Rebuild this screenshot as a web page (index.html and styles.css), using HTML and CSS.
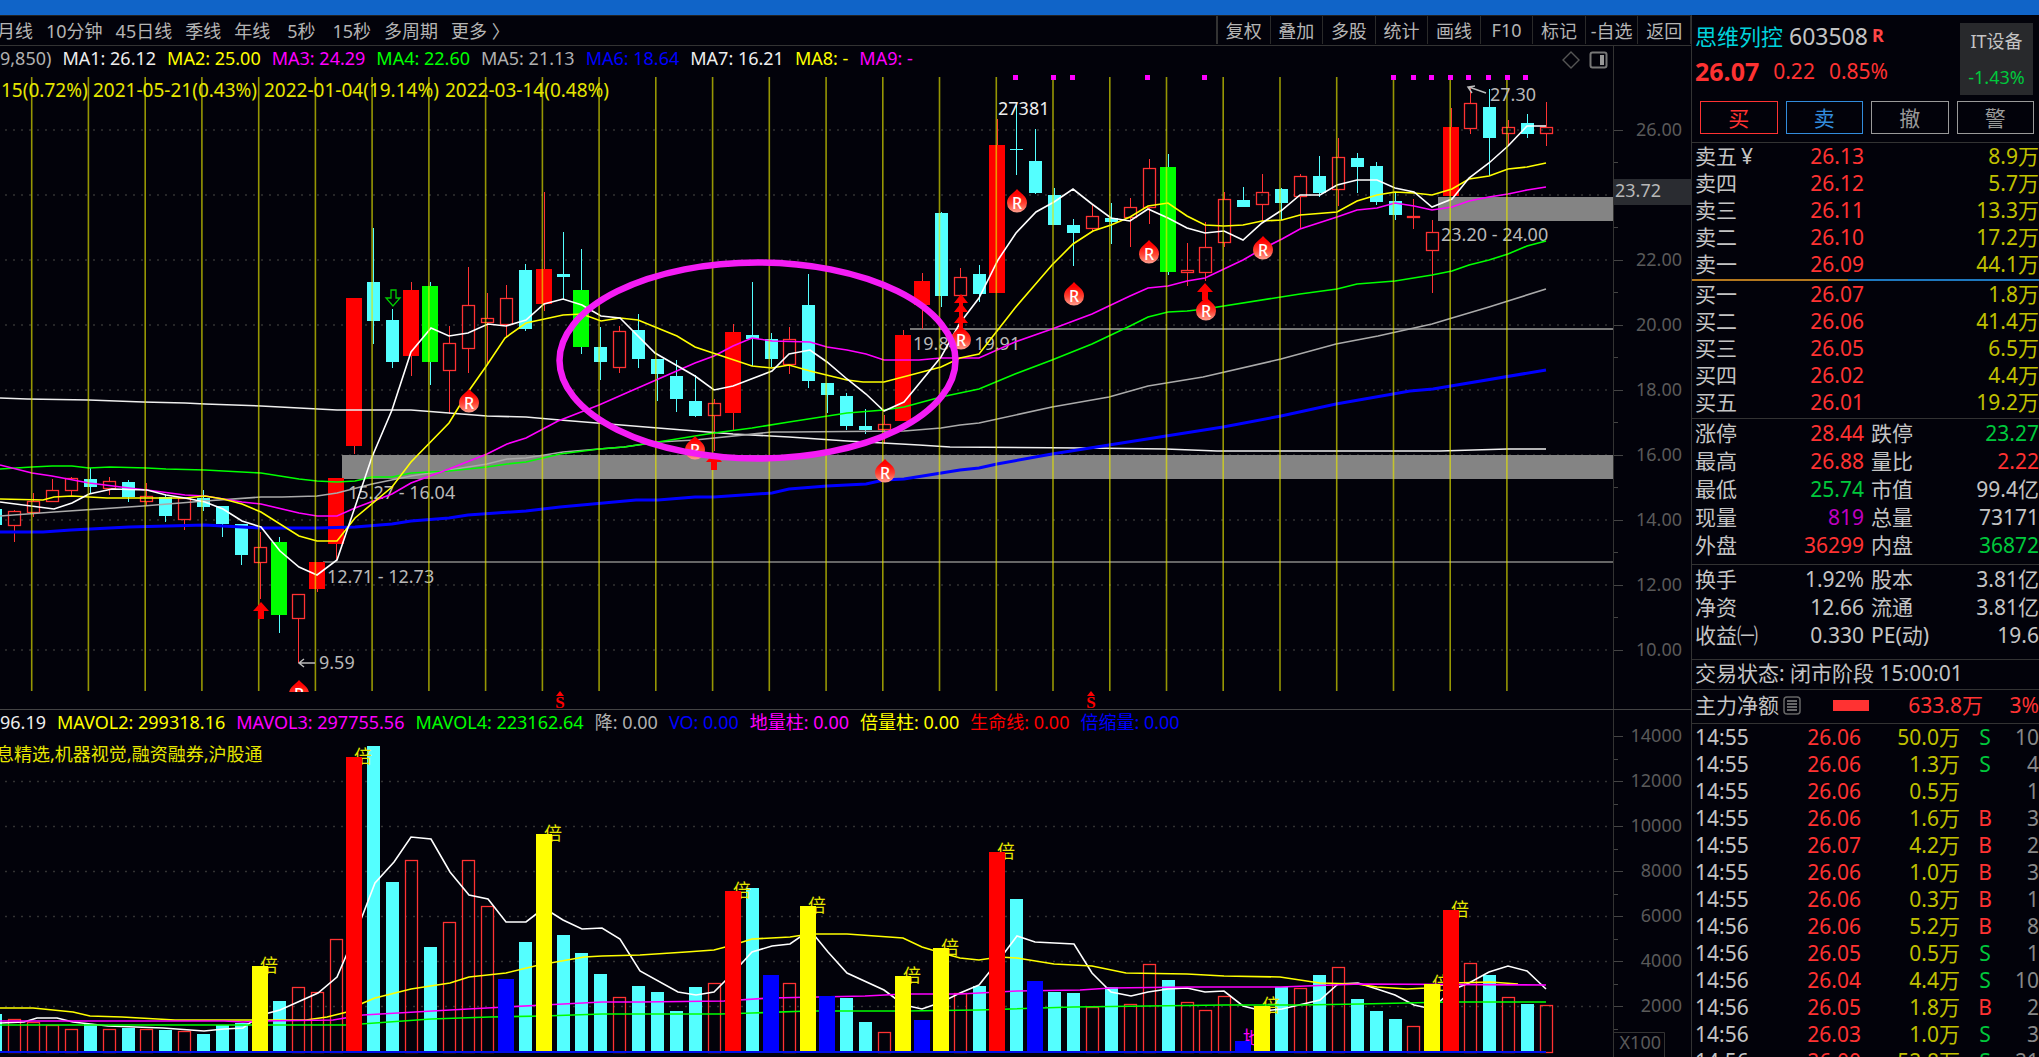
FILE: index.html
```html
<!DOCTYPE html>
<html lang="zh-CN">
  <head>
    <meta charset="UTF-8" />
    <meta name="viewport" content="width=device-width, initial-scale=1.0" />
    <title>思维列控 603508</title>
    <link rel="stylesheet" href="styles.css">
  </head>
  <body>
    <div class="titlebar"></div>
    <div class="app">
      <main class="main">
        <nav class="toolbar">
          <div class="periods">
            <button>月线</button>
            <button>10分钟</button>
            <button>45日线</button>
            <button>季线</button>
            <button>年线</button>
            <button class="sec">5秒</button>
            <button class="sec">15秒</button>
            <button>多周期</button>
            <button>更多 〉</button>
          </div>
          <div class="tools">
            <button>复权</button>
            <button>叠加</button>
            <button>多股</button>
            <button>统计</button>
            <button>画线</button>
            <button>F10</button>
            <button>标记</button>
            <button>-自选</button>
            <button>返回</button>
          </div>
        </nav>

        <div class="legend-row">
          <div class="legend">
            <span class="gray">9,850)</span>
            <span class="white">MA1: 26.12</span>
            <span class="yellow">MA2: 25.00</span>
            <span class="magenta">MA3: 24.29</span>
            <span class="green">MA4: 22.60</span>
            <span class="gray">MA5: 21.13</span>
            <span class="blue">MA6: 18.64</span>
            <span class="white">MA7: 16.21</span>
            <span class="yellow">MA8: -</span>
            <span class="magenta">MA9: -</span>
          </div>
          <div class="legend-icons">
            <svg width="18" height="18" viewBox="0 0 18 18">
              <path d="M9 1L17 9L9 17L1 9Z" fill="none" stroke="#555" stroke-width="1.4" />
            </svg>
            <svg width="20" height="18" viewBox="0 0 20 18">
              <rect x="1.5" y="1.5" width="16" height="15" rx="2" fill="none" stroke="#777" stroke-width="2" />
              <rect x="11" y="4" width="4" height="10" fill="#999" />
            </svg>
          </div>
          <div class="axis-head"></div>
        </div>
        <svg id="kline" class="chart" viewBox="0 70 1691 640"></svg>

        <div class="legend-row volume-row">
          <div class="legend">
            <span class="white">96.19</span>
            <span class="yellow">MAVOL2: 299318.16</span>
            <span class="magenta">MAVOL3: 297755.56</span>
            <span class="green">MAVOL4: 223162.64</span>
            <span class="gray">降: 0.00</span>
            <span class="blue">VO: 0.00</span>
            <span class="magenta">地量柱: 0.00</span>
            <span class="yellow">倍量柱: 0.00</span>
            <span class="red">生命线: 0.00</span>
            <span class="blue">倍缩量: 0.00</span>
          </div>
          <div class="axis-head"></div>
        </div>
        <svg id="volume" class="chart" viewBox="0 735 1691 322"></svg>
      </main>

      <aside class="side">
        <header class="quote">
          <div class="quote-main">
            <div class="name"><span class="cyan">思维列控</span> 603508<sup>R</sup></div>
            <div class="price"><b>26.07</b><span>0.22</span><span>0.85%</span></div>
          </div>
          <div class="sector"><span>IT设备</span><span class="down">-1.43%</span></div>
        </header>
        <div class="actions">
          <button class="buy">买</button>
          <button class="sell">卖</button>
          <button>撤</button>
          <button>警</button>
        </div>

        <table class="book asks">
          <tr><th>卖五<small>¥</small></th><td class="up">26.13</td><td class="amt">8.9万</td></tr>
          <tr><th>卖四</th><td class="up">26.12</td><td class="amt">5.7万</td></tr>
          <tr><th>卖三</th><td class="up">26.11</td><td class="amt">13.3万</td></tr>
          <tr><th>卖二</th><td class="up">26.10</td><td class="amt">17.2万</td></tr>
          <tr><th>卖一</th><td class="up">26.09</td><td class="amt">44.1万</td></tr>
        </table>
        <div class="ratio"></div>
        <table class="book">
          <tr><th>买一</th><td class="up">26.07</td><td class="amt">1.8万</td></tr>
          <tr><th>买二</th><td class="up">26.06</td><td class="amt">41.4万</td></tr>
          <tr><th>买三</th><td class="up">26.05</td><td class="amt">6.5万</td></tr>
          <tr><th>买四</th><td class="up">26.02</td><td class="amt">4.4万</td></tr>
          <tr><th>买五</th><td class="up">26.01</td><td class="amt">19.2万</td></tr>
        </table>

        <div class="block">
          <table class="stats">
            <tr><th>涨停</th><td class="up">28.44</td><th>跌停</th><td class="down">23.27</td></tr>
            <tr><th>最高</th><td class="up">26.88</td><th>量比</th><td class="up">2.22</td></tr>
            <tr><th>最低</th><td class="down">25.74</td><th>市值</th><td>99.4亿</td></tr>
            <tr><th>现量</th><td class="purple">819</td><th>总量</th><td>73171</td></tr>
            <tr><th>外盘</th><td class="up">36299</td><th>内盘</th><td class="down">36872</td></tr>
          </table>
        </div>
        <div class="block last">
          <table class="stats">
            <tr><th>换手</th><td>1.92%</td><th>股本</th><td>3.81亿</td></tr>
            <tr><th>净资</th><td>12.66</td><th>流通</th><td>3.81亿</td></tr>
            <tr><th>收益㈠</th><td>0.330</td><th>PE(动)</th><td>19.6</td></tr>
          </table>
        </div>
        <div class="status">交易状态: 闭市阶段 15:00:01</div>
        <div class="flow">
          <span>主力净额</span>
          <svg width="18" height="19" viewBox="0 0 18 19">
            <rect x="1" y="1" width="16" height="17" rx="3" fill="none" stroke="#666" stroke-width="1.5" />
            <path d="M4 5H14M4 8H14M4 11H14M4 14H14" stroke="#888" stroke-width="1.5" />
          </svg>
          <i></i>
          <span class="flow-amt up">633.8万</span>
          <span class="flow-pct up">3%</span>
        </div>

        <table class="ticks">
          <tr><td>14:55</td><td>26.06</td><td>50.0万</td><td class="down">S</td><td>10</td></tr>
          <tr><td>14:55</td><td>26.06</td><td>1.3万</td><td class="down">S</td><td>4</td></tr>
          <tr><td>14:55</td><td>26.06</td><td>0.5万</td><td></td><td>1</td></tr>
          <tr><td>14:55</td><td>26.06</td><td>1.6万</td><td class="up">B</td><td>3</td></tr>
          <tr><td>14:55</td><td>26.07</td><td>4.2万</td><td class="up">B</td><td>2</td></tr>
          <tr><td>14:55</td><td>26.06</td><td>1.0万</td><td class="up">B</td><td>3</td></tr>
          <tr><td>14:55</td><td>26.06</td><td>0.3万</td><td class="up">B</td><td>1</td></tr>
          <tr><td>14:56</td><td>26.06</td><td>5.2万</td><td class="up">B</td><td>8</td></tr>
          <tr><td>14:56</td><td>26.05</td><td>0.5万</td><td class="down">S</td><td>1</td></tr>
          <tr><td>14:56</td><td>26.04</td><td>4.4万</td><td class="down">S</td><td>10</td></tr>
          <tr><td>14:56</td><td>26.05</td><td>1.8万</td><td class="up">B</td><td>2</td></tr>
          <tr><td>14:56</td><td>26.03</td><td>1.0万</td><td class="down">S</td><td>3</td></tr>
          <tr><td>14:56</td><td>26.00</td><td>52.8万</td><td class="down">S</td><td>21</td></tr>
        </table>
      </aside>
    </div>

    <script src="chart.js"></script>
  </body>
</html>
```
FILE: styles.css
```css
* {
  box-sizing: border-box;
}

body {
  margin: 0;
  height: 100vh;
  display: flex;
  flex-direction: column;
  overflow: hidden;
  background-color: #02020a;
  color: #c4c4c4;
  font-family: "Noto Sans", "Noto Sans CJK SC", sans-serif;
  font-size: 18px;
}

button {
  background: none;
  border: 0;
  padding: 0;
  color: inherit;
  font: inherit;
  white-space: nowrap;
  cursor: pointer;
}

.titlebar {
  height: 15px;
  flex-shrink: 0;
  background-color: #1064c8;
}

.app {
  flex: 1;
  display: flex;
  min-height: 0;
}

.main {
  flex: 1;
  min-width: 0;
  overflow: hidden;
}

/* toolbar */
.toolbar {
  display: flex;
  justify-content: space-between;
  height: 31px;
  padding-bottom: 1px;
  border-top: 1px solid #222;
  border-bottom: 1px solid #333;
  color: #b4b4b4;
  overflow: hidden;
}

.periods {
  display: flex;
  align-items: center;
  gap: 13px;
  margin-left: -3px;
}

.periods .sec {
  padding-left: 4px;
}

.tools {
  display: grid;
  grid-template-columns: repeat(9, 1fr);
  width: 475px;
  border-left: 2px solid #333;
}

.tools button {
  border-right: 1px solid #2a2a2a;
}

.tools button:hover,
.periods button:hover {
  color: #fff;
}

/* indicator legends */
.legend-row {
  display: flex;
  height: 24px;
  line-height: 24px;
  white-space: nowrap;
}

.volume-row {
  height: 25px;
}

.legend {
  flex: 1;
  display: flex;
  gap: 11px;
  overflow: hidden;
}

.legend-icons {
  display: flex;
  align-items: center;
  gap: 9px;
  padding: 4px 4px 0 0;
}

.axis-head {
  width: 78px;
  border-left: 1px solid #333;
}

.chart {
  display: block;
  width: 100%;
  height: auto;
  overflow: visible;
}

.white { color: #eee; }
.gray { color: #b0b0b0; }
.yellow { color: #ff0; }
.magenta { color: #f0f; }
.green { color: #0f0; }
.blue { color: #00f; }
.red { color: #f00; }
.cyan { color: #00d2dc; }
.up { color: #ff3232; }
.down { color: #00c83c; }
.purple { color: #c000c0; }
.amt { color: #c0c000; }

.chart text {
  font-size: 18px;
}

.chart .dates {
  font-size: 19px;
  fill: #e6e600;
}

.chart .axis {
  fill: #5a5a5a;
  text-anchor: end;
}

.chart .note {
  fill: #b8b8b8;
}

.chart .r-text {
  font-size: 16px;
  font-weight: 500;
  fill: #fff;
  text-anchor: middle;
}

.chart .s-text {
  font-family: "Liberation Serif", serif;
  font-size: 17px;
  font-weight: bold;
  fill: #f00;
  text-anchor: middle;
}

/* right panel */
.side {
  width: 348px;
  flex-shrink: 0;
  border-left: 1px solid #333;
  font-size: 21px;
  line-height: 27px;
  overflow: hidden;
}

.quote {
  display: flex;
  justify-content: space-between;
  height: 80px;
  padding: 8px 6px 0 3px;
}

.quote-main {
  white-space: nowrap;
}

.name {
  font-size: 23px;
  line-height: 26px;
}

.name .cyan {
  font-size: 22px;
}

.name sup {
  margin-left: 4px;
  font-size: 18px;
  font-weight: bold;
  line-height: 1;
  vertical-align: 3px;
  color: #ff4646;
}

.price {
  display: flex;
  align-items: center;
  gap: 14px;
  height: 44px;
  color: #ff3232;
}

.price b {
  font-size: 25px;
}

.sector {
  display: flex;
  flex-direction: column;
  justify-content: space-around;
  width: 73px;
  height: 72px;
  background-color: #28292c;
  font-size: 18px;
  text-align: center;
}

.actions {
  display: grid;
  grid-template-columns: repeat(4, 1fr);
  gap: 8px;
  padding: 6px 5px 8px 8px;
  border-bottom: 1px solid #333;
}

.actions button {
  height: 33px;
  line-height: 30px;
  border: 1px solid #999;
  color: #999;
}

.actions .buy {
  border-color: #ff3232;
  color: #ff3232;
}

.actions .sell {
  border-color: #328cdc;
  color: #328cdc;
}

table {
  width: 100%;
  border-collapse: collapse;
  table-layout: fixed;
}

th,
td {
  padding: 0;
  font-weight: normal;
  text-align: right;
  white-space: nowrap;
}

th {
  text-align: left;
}

tr {
  height: 27px;
}

.book th {
  width: 92px;
  padding-left: 3px;
}

.book th small {
  margin-left: 4px;
  font-size: 21px;
}

.book .up {
  width: 80px;
}

.asks {
  margin-bottom: 1px;
}

.ratio {
  height: 2px;
  background: linear-gradient(90deg, #b4781e 45%, #1e78be 45%);
}

.block {
  margin-top: 2px;
  padding: 0 0 5px;
  border-top: 1px solid #333;
}

.block.last {
  margin-top: 0;
  padding-bottom: 10px;
}

.stats {
  line-height: 28px;
}

.stats tr {
  height: 28px;
}

.stats th {
  width: 85px;
  padding-left: 3px;
}

.stats td:nth-child(2) {
  width: 87px;
}

.stats td + th {
  padding-left: 7px;
}

.status {
  height: 30px;
  padding-left: 3px;
  border-top: 1px solid #333;
}

.flow {
  display: flex;
  align-items: center;
  height: 35px;
  padding: 0 0 3px 3px;
  border-top: 1px solid #333;
  border-bottom: 1px solid #333;
  white-space: nowrap;
}

.flow svg {
  margin-left: 4px;
}

.flow i {
  width: 36px;
  height: 11px;
  margin-left: 32px;
  background-color: #ff3232;
}

.flow-amt {
  width: 114px;
  text-align: right;
}

.flow-pct {
  flex: 1;
  text-align: right;
}

.ticks td:nth-child(1) {
  width: 79px;
  padding-left: 3px;
  text-align: left;
}

.ticks td:nth-child(2) {
  width: 90px;
  color: #ff3232;
}

.ticks td:nth-child(3) {
  width: 99px;
  color: #c0c000;
}

.ticks td:nth-child(4) {
  width: 50px;
  text-align: center;
}

.ticks td:nth-child(5) {
  color: #888;
}
```
FILE: chart.js
```js
const CYAN = "#54ffff";
const RED = "#ff3232";

// type, high, body top, body bottom, low, volume top
// c = falling, r = rising (hollow), R = limit up, G = limit down
// volume colour follows the type unless a letter is given at the end
const candles = [
  ["c", 509, 509, 525, 525, 1014],
  ["r", 510, 511, 526, 542, 1019],
  ["r", 493, 501, 513, 517, 1022],
  ["r", 479, 490, 502, 502, 1025],
  ["r", 477, 478, 491, 497, 1029],
  ["c", 468, 479, 487, 493, 1024],
  ["r", 477, 481, 489, 495, 1029],
  ["c", 480, 482, 497, 502, 1028],
  ["r", 483, 496, 502, 506, 1029],
  ["c", 495, 497, 516, 522, 1030],
  ["r", 498, 498, 520, 530, 1031],
  ["c", 490, 498, 507, 511, 1034],
  ["c", 506, 506, 524, 537, 1025],
  ["c", 524, 524, 555, 565, 1023],
  ["r", 532, 547, 563, 599, 966, "Y"],
  ["G", 537, 542, 615, 633, 1001, "c"],
  ["r", 594, 594, 619, 663, 987],
  ["R", 562, 562, 589, 592, 992, "r"],
  ["R", 478, 478, 544, 560, 939, "r"],
  ["R", 298, 298, 446, 454, 757],
  ["c", 228, 282, 321, 344, 746],
  ["c", 309, 320, 362, 368, 882],
  ["R", 282, 290, 356, 376, 860, "r"],
  ["G", 282, 286, 362, 385, 947, "c"],
  ["r", 326, 343, 371, 414, 922],
  ["r", 267, 305, 349, 373, 860],
  ["r", 293, 318, 323, 365, 906],
  ["r", 285, 298, 325, 337, 979, "B"],
  ["c", 264, 270, 329, 331, 942],
  ["R", 192, 269, 304, 311, 834, "Y"],
  ["c", 232, 274, 277, 299, 935],
  ["G", 249, 290, 347, 354, 953, "c"],
  ["c", 327, 347, 362, 380, 974],
  ["r", 326, 331, 368, 373, 997],
  ["c", 314, 330, 359, 368, 986],
  ["c", 359, 359, 374, 401, 992],
  ["c", 360, 376, 399, 412, 1011],
  ["c", 375, 401, 416, 417, 987],
  ["r", 399, 403, 416, 451, 983],
  ["R", 324, 332, 413, 430, 891],
  ["c", 282, 335, 339, 366, 888],
  ["c", 333, 339, 359, 367, 975, "B"],
  ["r", 327, 339, 365, 374, 983],
  ["c", 274, 305, 381, 388, 906, "Y"],
  ["c", 383, 383, 395, 413, 996, "B"],
  ["c", 393, 396, 426, 430, 998],
  ["c", 409, 426, 430, 434, 1022],
  ["r", 415, 424, 430, 444, 1032],
  ["R", 330, 335, 421, 421, 976, "Y"],
  ["R", 273, 281, 305, 329, 1020, "B"],
  ["c", 212, 213, 296, 307, 948, "Y"],
  ["r", 268, 277, 296, 296, 993],
  ["c", 265, 274, 294, 302, 986],
  ["R", 119, 145, 293, 293, 852],
  ["c", 105, 149, 150, 175, 899],
  ["c", 129, 161, 193, 194, 981, "B"],
  ["c", 188, 195, 225, 225, 992],
  ["c", 219, 225, 233, 266, 993],
  ["r", 205, 216, 229, 232, 1007],
  ["c", 203, 218, 222, 244, 987],
  ["r", 198, 207, 218, 247, 1004],
  ["r", 159, 168, 208, 224, 964],
  ["G", 154, 167, 272, 275, 980, "c"],
  ["r", 243, 270, 273, 286, 1002],
  ["r", 222, 247, 273, 281, 1010],
  ["r", 192, 199, 243, 247, 996],
  ["c", 187, 200, 207, 207, 1041, "B"],
  ["r", 174, 192, 205, 221, 1006, "Y"],
  ["c", 188, 189, 203, 220, 987],
  ["r", 174, 176, 197, 228, 988],
  ["c", 156, 176, 193, 197, 975],
  ["r", 138, 157, 190, 206, 967],
  ["c", 153, 158, 167, 193, 999],
  ["c", 162, 166, 202, 205, 1011],
  ["c", 192, 201, 215, 220, 1019],
  ["r", 199, 216, 218, 229, 1026],
  ["r", 220, 232, 251, 293, 984, "Y"],
  ["R", 108, 127, 196, 196, 910],
  ["r", 88, 103, 129, 134, 963],
  ["c", 89, 107, 138, 175, 975],
  ["r", 120, 127, 134, 146, 997],
  ["c", 114, 123, 134, 138, 1004],
  ["r", 102, 127, 134, 146, 1005],
];

const cx = (i) => Math.round(-4.8 + 18.91 * i);

const rect = (x, y, w, h, fill) =>
  `<rect x="${x}" y="${y}" width="${w}" height="${h}" fill="${fill}" shape-rendering="crispEdges"/>`;
const hollow = (x, y, w, h) =>
  `<rect x="${x + 0.5}" y="${y + 0.5}" width="${w - 1}" height="${Math.max(h - 1, 1)}" fill="none" stroke="${RED}" stroke-width="1.3"/>`;
const line = (points, color, width = 1.6) =>
  `<polyline points="${points}" fill="none" stroke="${color}" stroke-width="${width}"/>`;
const text = (x, y, cls, value, fill) =>
  `<text x="${x}" y="${y}" class="${cls}"${fill ? ` fill="${fill}"` : ""}>${value}</text>`;
const dots = (y) =>
  `<path d="M5 ${y}H1612" stroke="#333" stroke-width="1.5" stroke-dasharray="2 6"/>`;

function drawKline() {
  let s = `<defs><linearGradient id="drop" x1="0" y1="0" x2="0" y2="1">
    <stop offset="0.2" stop-color="#f00"/><stop offset="0.6" stop-color="#ff4030"/><stop offset="1" stop-color="#ffa090"/>
  </linearGradient></defs>`;

  // grid and price axis
  for (let p = 26, k = 0; p >= 10; p -= 2, k++) {
    const y = 130 + k * 65;
    s += dots(y) + rect(1614, y, 9, 1, "#444");
    if (k < 8) s += rect(1614, y + 32, 4, 1, "#444");
    if (p !== 24) s += text(1682, y + 6, "axis", p.toFixed(2));
  }
  s += rect(1613, 70, 1, 640, "#333") + rect(0, 709, 1691, 1, "#444");
  s += rect(1614, 179, 77, 26, "#2a2c31") + text(1615, 197, "note", "23.72");

  // gaps
  s += rect(342, 455, 1271, 24, "#848484") + rect(1438, 197, 175, 24, "#848484");
  s += rect(323, 561, 1290, 2, "#666") + rect(910, 328, 703, 2, "#777");
  s += text(348, 499, "note", "15.27 - 16.04") + text(327, 583, "note", "12.71 - 12.73");
  s += text(913, 350, "note", "19.84 - 19.91") + text(1441, 241, "note", "23.20 - 24.00");

  candles.forEach(([type, high, top, bottom, low], i) => {
    const x = cx(i);
    const h = Math.max(bottom - top, 1);
    const wick = type === "c" || type === "G" ? CYAN : RED;
    s += rect(x, high, 1, top - high, wick) + rect(x, bottom, 1, low - bottom, wick);
    if (type === "c") s += rect(x - 6, top, 13, h, CYAN);
    if (type === "r") s += hollow(x - 6, top, 13, h);
    if (type === "R") s += rect(x - 8, top, 16, h, "#f00");
    if (type === "G") s += rect(x - 8, top, 16, h, "#0f0");
  });

  // moving averages
  s += line("0,398 27,399 89,400 143,402 185,403 205,404 261,406 299,408 337,410 411,410 449,413 487,416 526,417 560,420 658,428 733,434 789,437 847,441 919,445 950,447 1084,448 1166,449 1217,451 1440,451 1507,449 1546,449", "#eee");
  s += line("0,532 43,532 71,530 129,527 205,525 223,526 261,528 317,528 355,527 392,524 411,521 449,518 468,515 526,511 560,507 636,500 658,500 695,497 714,497 772,493 789,489 827,486 866,484 884,480 904,479 960,470 979,468 997,464 1052,454 1109,445 1166,436 1223,427 1281,416 1336,404 1410,391 1433,389 1546,370", "#00f", 3);
  s += line("0,516 54,512 143,506 205,501 261,497 282,497 317,496 337,493 372,484 411,476 449,470 487,464 507,459 526,458 563,452 599,449 624,447 658,442 695,440 772,432 789,432 904,431 941,428 960,425 979,423 1052,407 1109,397 1148,386 1203,377 1281,359 1336,344 1378,336 1432,324 1452,318 1489,307 1508,301 1546,289", "#aaa");
  s += line("0,469 32,467 52,466 72,466 89,468 110,467 147,468 166,469 205,470 261,473 299,479 317,481 337,482 355,481 372,477 392,477 411,473 449,471 487,467 507,464 526,462 560,454 599,449 624,447 658,442 695,436 714,433 752,428 789,422 847,413 884,410 904,407 941,397 960,393 979,389 1015,374 1052,360 1092,344 1130,326 1148,317 1168,312 1187,311 1205,309 1300,294 1337,289 1357,284 1395,281 1432,275 1452,271 1469,265 1489,260 1508,254 1527,246 1546,241", "#0f0");
  s += line("0,465 32,473 52,476 89,483 129,488 147,490 185,495 205,496 242,502 261,504 299,513 317,516 337,516 355,508 392,494 411,483 449,469 487,454 507,444 526,438 558,421 599,405 624,394 695,363 714,356 733,346 752,338 772,341 810,342 827,347 847,350 866,354 884,360 919,360 941,358 979,358 1015,342 1052,329 1092,314 1130,296 1148,288 1168,286 1187,281 1205,278 1243,260 1262,249 1282,239 1300,229 1337,217 1357,210 1377,208 1395,203 1414,206 1432,210 1452,207 1469,201 1489,197 1508,194 1527,190 1546,187", "#f0f");
  s += line("0,499 43,500 54,497 72,496 107,498 185,498 205,496 223,499 242,504 261,512 299,536 317,541 337,541 355,518 392,487 411,462 449,423 468,392 487,365 505,338 526,323 563,315 582,314 601,321 620,318 638,320 677,336 695,347 752,366 772,368 789,365 810,371 847,380 863,382 884,382 941,367 960,358 979,354 1015,308 1052,265 1073,244 1093,231 1111,225 1130,217 1148,206 1168,203 1187,216 1205,225 1224,226 1243,225 1262,221 1282,220 1300,215 1337,212 1357,201 1377,195 1395,192 1414,193 1432,195 1452,189 1469,179 1489,176 1508,169 1527,167 1546,163", "#ff0");
  s += line("0,502 54,509 72,503 89,494 112,489 147,490 166,495 185,498 205,502 223,509 242,521 261,527 280,551 299,567 317,575 337,560 355,507 372,457 392,410 411,352 431,328 449,336 468,333 488,324 506,326 526,320 544,304 563,299 582,305 601,316 620,318 655,353 695,376 714,390 733,386 772,371 789,354 810,350 827,362 847,379 866,394 884,411 904,402 941,357 960,323 979,298 998,260 1016,233 1036,212 1054,202 1073,189 1092,204 1111,218 1130,221 1148,209 1168,218 1187,228 1205,233 1224,231 1243,240 1262,223 1282,210 1300,195 1320,195 1337,185 1357,180 1377,180 1395,188 1414,192 1432,207 1452,199 1469,178 1489,163 1508,146 1527,126 1546,126", "#fff");

  // every third bar gets a divider
  for (let k = 0; k < 27; k++) {
    s += `<path d="M${(31.7 + k * 56.74).toFixed(1)} 77V691" stroke="#e6e600" stroke-opacity="0.65" stroke-width="1.6"/>`;
  }

  const dates = [[1, "15(0.72%)"], [93, "2021-05-21(0.43%)"], [264, "2022-01-04(19.14%)"], [445, "2022-03-14(0.48%)"]];
  dates.forEach(([x, t]) => (s += text(x, 97, "dates", t)));

  [1015, 1053, 1072, 1147, 1204, 1393, 1413, 1431, 1450, 1468, 1488, 1507, 1525].forEach(
    (x) => (s += rect(x - 2, 75, 5, 5, "#f0f"))
  );

  // high and low callouts
  s += text(998, 115, "", "27381", "#eee") + text(1490, 101, "note", "27.30") + text(319, 669, "note", "9.59");
  s += '<path d="M1486 93L1469 87M1475 86L1468 87L1472 93M315 663H299M304 659L299 663L304 667" fill="none" stroke="#bbb" stroke-width="1.5"/>';

  // arrows
  [[261, 602], [714, 453], [1205, 283]].forEach(
    ([x, y]) => (s += `<path d="M${x} ${y}l8 9h-5v8h-6v-8h-5z" fill="#f00"/>`)
  );
  [294, 303, 314].forEach((y) => (s += `<path d="M961 ${y}l7 9h-5v6h-4v-6h-5z" fill="#f00"/>`));
  s += '<path d="M391 290h5v8h4l-7 8l-7 -8h5z" fill="none" stroke="#0c0" stroke-width="1.3"/>';

  [[469, 389], [299, 680], [695, 436], [885, 459], [1017, 189], [1074, 282], [1149, 240], [1206, 297], [1263, 236], [961, 326]].forEach(([x, y]) => {
    s += `<path d="M${x} ${y}C${x + 4} ${y + 5} ${x + 10} ${y + 7} ${x + 10} ${y + 14}a10 9.5 0 0 1 -20 0C${x - 10} ${y + 7} ${x - 4} ${y + 5} ${x} ${y}Z" fill="url(#drop)"/>`;
    s += text(x, y + 20, "r-text", "R");
  });
  s += rect(285, 692, 30, 14, "#02020a");

  [560, 1091].forEach((x) => {
    s += `<path d="M${x} 691l4 5h-8z" fill="#f00"/>` + text(x, 708, "s-text", "S");
  });

  s += '<ellipse cx="757.5" cy="360.5" rx="198" ry="98" fill="none" stroke="#f41cf4" stroke-width="6.5"/>';
  document.getElementById("kline").innerHTML = s;
}

function drawVolume() {
  const solid = { Y: "#ff0", R: "#f00", B: "#00f" };
  let s = "";

  for (let v = 14000, k = 0; v >= 2000; v -= 2000, k++) {
    const y = 736 + k * 45;
    if (k > 0) s += dots(y + 0.5);
    s += rect(1614, y, 9, 1, "#444") + rect(1614, y + 23, 4, 1, "#444");
    s += text(1682, y + 6, "axis", v);
  }
  s += rect(1613, 735, 1, 322, "#333");
  s += '<path d="M1614 1032.5H1664.5V1057" fill="none" stroke="#333"/>' + text(1661, 1049, "axis", "X100");
  s += text(-4, 761, "", "息精选,机器视觉,融资融券,沪股通", "#e6e600");

  const kind = (c) => c[6] || c[0];
  candles.forEach((c, i) => {
    if (kind(c) === "c") s += rect(cx(i) - 6, c[5], 13, 1053 - c[5], CYAN);
    if (kind(c) === "r") s += hollow(cx(i) - 6, c[5], 13, 1053 - c[5]);
  });

  candles.forEach((c, i) => {
    if ("YR".includes(kind(c))) s += text(cx(i), c[5] + 6, "", "倍", "#e6e600");
  });
  s += text(1243, 1044, "", "地", "#f0f");

  // volume averages
  s += line("0,1023 24,1022 37,1018 57,1018 73,1022 108,1026 163,1028 204,1031 224,1029 243,1028 261,1015 280,1010 318,993 337,977 355,935 375,883 394,862 411,837 431,839 450,872 469,895 488,899 506,922 526,922 544,908 563,920 582,929 602,928 620,939 640,971 678,992 696,995 714,992 733,973 752,952 772,946 790,944 810,930 828,952 847,973 884,990 904,1005 922,1009 942,1002 960,993 979,985 999,960 1017,936 1035,942 1074,944 1092,973 1111,992 1131,996 1148,992 1168,989 1187,988 1205,992 1224,991 1243,1006 1263,1011 1282,1009 1320,1000 1338,984 1358,983 1377,989 1395,995 1414,1005 1432,1009 1452,990 1469,983 1489,972 1508,966 1527,971 1546,989", "#fff");
  s += line("0,1008 33,1008 73,1012 90,1016 122,1017 175,1020 306,1020 327,1017 347,1012 363,1003 375,998 411,989 450,983 469,977 506,973 539,965 584,957 602,956 640,955 686,952 714,950 733,945 752,939 790,937 810,934 847,934 903,938 922,947 942,953 960,958 979,960 999,957 1017,958 1054,964 1092,966 1126,973 1187,974 1224,976 1280,977 1320,983 1357,984 1377,987 1407,989 1427,988 1452,983 1490,982 1518,984", "#ff0");
  s += line("0,1021 224,1021 243,1022 261,1021 333,1020 363,1015 450,1010 544,1005 602,1002 640,1002 724,1001 770,998 865,996 905,994 960,994 1017,991 1080,990 1111,988 1187,987 1280,987 1360,984 1546,985", "#f0f");
  s += line("0,1025 347,1025 375,1023 431,1019 490,1017 544,1016 602,1014 720,1014 752,1013 809,1011 905,1011 979,1010 1073,1007 1224,1005 1300,1005 1360,1004 1450,1002 1546,1002", "#0f0");

  candles.forEach((c, i) => {
    const fill = solid[kind(c)];
    if (fill) s += rect(cx(i) - 8, c[5], 16, 1052 - c[5], fill);
  });
  s += rect(0, 1051, 1546, 2, "#0010e6");
  document.getElementById("volume").innerHTML = s;
}

drawKline();
drawVolume();
```
